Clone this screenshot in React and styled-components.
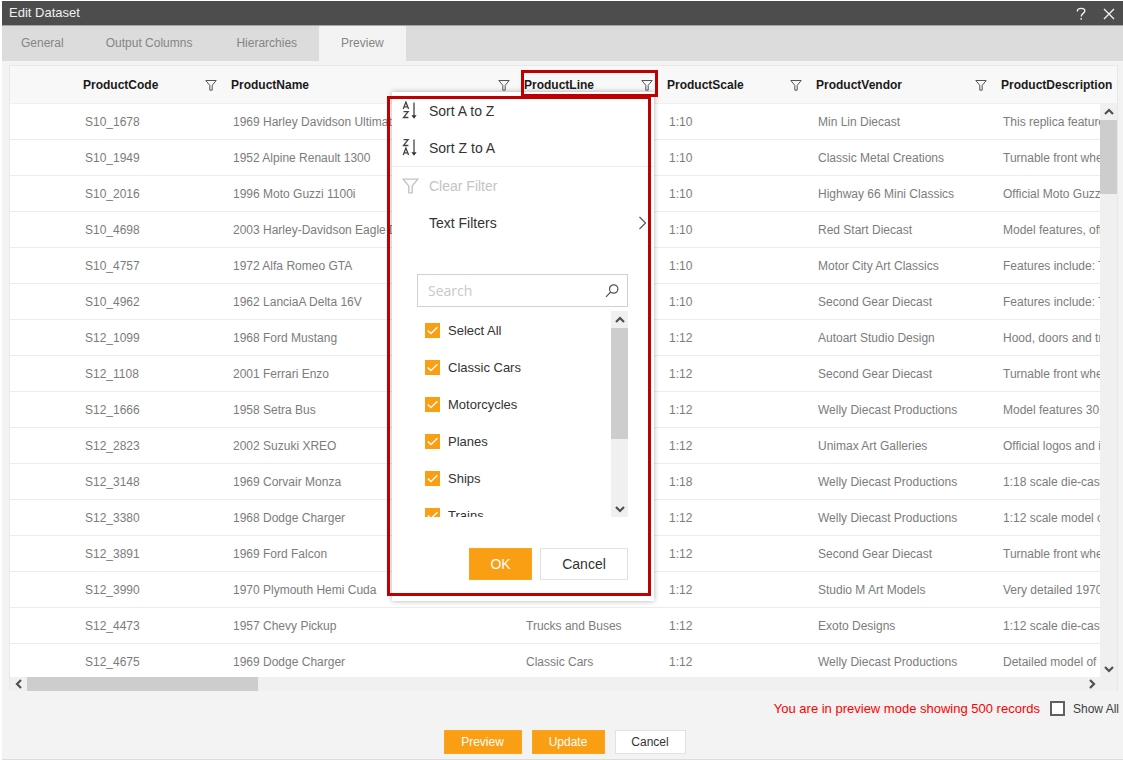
import React from "react";
import styled, { createGlobalStyle, css } from "styled-components";

const GlobalStyle = createGlobalStyle`
  * { box-sizing: border-box; }
  html, body { margin: 0; background: #fff; }
  body, button, input { font-family: "Liberation Sans", Arial, sans-serif; }
  button { margin: 0; padding: 0; cursor: pointer; }
`;

const Dialog = styled.main`
  position: relative;
  display: flex;
  flex-direction: column;
  height: 100vh;
  min-height: 660px;
  padding-bottom: 6px;
  margin-left: 2px;
  border-top: 1px solid #fff;
  box-shadow: inset 0 -1px #dcdcdc;
  background: #f3f3f3;
  overflow: hidden;
`;

const TitleBar = styled.header`
  display: flex;
  align-items: center;
  justify-content: space-between;
  flex: none;
  height: 25px;
  padding: 0 8px 2px 7px;
  background: #4d4d4d;
  border-bottom: 1px solid #a6a6a6;
  color: #f0f0f0;
`;

const Title = styled.h1`
  margin: 0;
  font-size: 13px;
  font-weight: 400;
`;

const TitleActions = styled.div`
  display: flex;
  gap: 16px;
  padding-top: 4px;
`;

const IconButton = styled.button`
  display: flex;
  align-items: center;
  justify-content: center;
  border: 0;
  background: none;
  color: inherit;
`;

const Tabs = styled.nav`
  display: flex;
  flex: none;
  height: 35px;
  background: #dcdcdc;
`;

const Tab = styled.button`
  padding: 0 22px 2px;
  border: 0;
  font-size: 12px;
  color: #858585;
  background: ${(p) => (p.$active ? "#f3f3f3" : "transparent")};
  &:first-child { padding: 0 20px 2px 19px; }
`;

const GridPanel = styled.section`
  display: grid;
  grid-template-rows: minmax(0, 1fr) 14px;
  flex: 1;
  min-height: 0;
  margin: 4px 5px 0 7px;
  border: 1px solid #e8e8e8;
  border-bottom: 0;
`;

const Viewport = styled.div`
  grid-area: 1 / 1;
  min-height: 0;
  overflow: hidden;
  background: #fff;
`;

const Table = styled.table`
  width: 100%;
  table-layout: fixed;
  border-spacing: 0;
  font-size: 12px;
`;

const HeadCell = styled.th`
  height: 38px;
  padding: 1px 4px 0 10px;
  background: #f8f8f8;
  border-bottom: 1px solid #f0f0f0;
  color: #1a1a1a;
  text-align: left;
  white-space: nowrap;
`;

const HeadContent = styled.div`
  display: flex;
  align-items: center;
  justify-content: space-between;
`;

const FilterButton = styled(IconButton)`
  color: #555;
`;

const Cell = styled.td`
  height: 36px;
  padding: 0 0 0 12px;
  border-bottom: 1px solid #ececec;
  color: #7c7c7c;
  white-space: nowrap;
  overflow: hidden;
`;

const ScrollTrack = styled.div`
  display: flex;
  background: #f0f0f0;
  ${(p) =>
    p.$horizontal
      ? css`height: 14px; padding-right: 17px;`
      : css`flex-direction: column; width: 17px;`}
`;

const GridScroll = styled(ScrollTrack)`
  grid-area: 1 / 1;
  justify-self: end;
  margin-top: 37px;
`;

const ScrollThumb = styled.div`
  background: #cdcdcd;
  ${(p) => (p.$horizontal ? `width: ${p.$size}px;` : `height: ${p.$size}px;`)}
`;

const ScrollButton = styled(IconButton)`
  flex: none;
  width: 17px;
  height: ${(p) => (p.$horizontal ? 14 : 17)}px;
  color: #505050;
  ${(p) => p.$end && (p.$horizontal ? "margin-left: auto;" : "margin-top: auto;")}
`;

const StatusRow = styled.div`
  display: flex;
  align-items: center;
  justify-content: flex-end;
  flex: none;
  height: 35px;
  gap: 10px;
  padding-right: 4px;
`;

const Notice = styled.span`
  font-size: 13px;
  color: #f00;
`;

const ShowAll = styled.label`
  display: flex;
  align-items: center;
  gap: 8px;
  font-size: 12px;
  color: #404040;
`;

const PlainCheck = styled.input`
  appearance: none;
  width: 15px;
  height: 15px;
  margin: 0;
  border: 2px solid #606060;
  background: #fff;
`;

const FooterActions = styled.footer`
  display: flex;
  justify-content: center;
  flex: none;
  gap: 10px;
  height: 28px;
  padding: 4px 0 0 4px;
`;

const Button = styled.button`
  width: ${(p) => p.$width}px;
  height: ${(p) => (p.$large ? 32 : 24)}px;
  font-size: ${(p) => (p.$large ? 14 : 12)}px;
  border: 1px solid ${(p) => (p.$primary ? "#fba51f" : "#e2e2e2")};
  background: ${(p) => (p.$primary ? "#fa9e14" : "#fff")};
  color: ${(p) => (p.$primary ? "#fff" : "#333")};
`;

const HeaderHighlight = styled.div`
  position: absolute;
  left: 519px;
  top: 69px;
  width: 137px;
  height: 27px;
  border: 3px solid #c00000;
  pointer-events: none;
`;

const FilterMenu = styled.section`
  position: absolute;
  left: 390px;
  top: 91px;
  width: 262px;
  background: #fff;
  box-shadow: 0 0 5px rgba(0, 0, 0, 0.32);
  padding-bottom: 21px;
`;

const MenuHighlight = styled.div`
  position: absolute;
  inset: 4px 3px 5px -5px;
  border: 3px solid #c00000;
  pointer-events: none;
`;

const MenuItem = styled.button`
  display: grid;
  grid-template-columns: 27px 1fr 9px;
  align-items: center;
  width: 100%;
  height: 37px;
  padding: 0 7px 0 10px;
  border: 0;
  background: none;
  font-size: 14px;
  text-align: left;
  color: ${(p) => (p.disabled ? "#c4c4c4" : "#333")};
`;

const Separator = styled.hr`
  height: 1px;
  margin: 0;
  border: 0;
  background: #ececec;
`;

const MenuBody = styled.div`
  padding: 33px 26px 0 25px;
`;

const SearchBox = styled.label`
  display: flex;
  align-items: center;
  height: 33px;
  padding: 0 8px 0 10px;
  border: 1px solid #cbd1dc;
`;

const SearchInput = styled.input`
  flex: 1;
  min-width: 0;
  padding: 0;
  border: 0;
  outline: 0;
  font-family: "Open Sans", "Noto Sans", sans-serif;
  font-size: 14px;
  &::placeholder { color: #c8c8c8; opacity: 1; }
`;

const ValueArea = styled.div`
  display: flex;
  height: 206px;
  margin-top: 4px;
`;

const ValueList = styled.div`
  flex: 1;
  padding: 1px 0 0 8px;
  overflow: hidden;
`;

const ValueRow = styled.label`
  display: flex;
  align-items: center;
  gap: 8px;
  height: 37px;
  font-size: 13px;
  color: #333;
`;

const CheckWrap = styled.span`
  display: grid;
  width: 15px;
  height: 15px;
  background: #fa9e14;
  & > * { grid-area: 1 / 1; }
`;

const ValueCheck = styled.input`
  appearance: none;
  width: 15px;
  height: 15px;
  margin: 0;
`;

const MenuActions = styled.div`
  display: flex;
  justify-content: flex-end;
  gap: 8px;
  margin-top: 31px;
`;

const Funnel = ({ size = 12 }) => (
  <svg width={size} height={size} viewBox="0 0 12 12" fill="none" stroke="currentColor" strokeWidth="1" aria-hidden="true">
    <path d="M.8 1.5h10.4L7.2 6.3v4.9H4.8V6.3z" />
  </svg>
);

const Chevron = ({ dir }) => {
  const turn = { up: 0, right: 90, down: 180, left: 270 }[dir];
  return (
    <svg width="10" height="10" viewBox="0 0 10 10" fill="none" stroke="currentColor" strokeWidth="2.2" aria-hidden="true">
      <path d="M1 7l4-4 4 4" transform={`rotate(${turn} 5 5)`} />
    </svg>
  );
};

const SortIcon = ({ reverse }) => {
  const a = (y) => <path d={`M1.2 ${y + 7}L3.9 ${y}L6.6 ${y + 7}M2.2 ${y + 4.8}h3.4`} />;
  const z = (y) => <path d={`M1.5 ${y + 0.6}h4.6L1.5 ${y + 6.5}h4.9`} />;
  return (
    <svg width="16" height="19" viewBox="0 0 16 19" fill="none" stroke="#444" strokeWidth="1.3" aria-hidden="true">
      {reverse ? z(1) : a(1)}
      {reverse ? a(10) : z(10)}
      <path d="M12 1.5v14" />
      <path d="M9.4 14.2h5.2l-2.6 3.6z" fill="#333" stroke="none" />
    </svg>
  );
};

const VerticalScroll = ({ as: Track = ScrollTrack, size }) => (
  <Track>
    <ScrollButton type="button" aria-label="Scroll up"><Chevron dir="up" /></ScrollButton>
    <ScrollThumb $size={size} />
    <ScrollButton type="button" aria-label="Scroll down" $end><Chevron dir="down" /></ScrollButton>
  </Track>
);

const columns = [
  { name: "ProductCode", width: 148 },
  { name: "ProductName", width: 293 },
  { name: "ProductLine", width: 143 },
  { name: "ProductScale", width: 149 },
  { name: "ProductVendor", width: 185 },
  { name: "ProductDescription" },
];

const rows = [
  ["S10_1678", "1969 Harley Davidson Ultimate", "", "1:10", "Min Lin Diecast", "This replica features"],
  ["S10_1949", "1952 Alpine Renault 1300", "", "1:10", "Classic Metal Creations", "Turnable front wheels"],
  ["S10_2016", "1996 Moto Guzzi 1100i", "", "1:10", "Highway 66 Mini Classics", "Official Moto Guzzi"],
  ["S10_4698", "2003 Harley-Davidson Eagle D", "", "1:10", "Red Start Diecast", "Model features, offic"],
  ["S10_4757", "1972 Alfa Romeo GTA", "", "1:10", "Motor City Art Classics", "Features include: Tu"],
  ["S10_4962", "1962 LanciaA Delta 16V", "", "1:10", "Second Gear Diecast", "Features include: Tu"],
  ["S12_1099", "1968 Ford Mustang", "", "1:12", "Autoart Studio Design", "Hood, doors and trunk"],
  ["S12_1108", "2001 Ferrari Enzo", "", "1:12", "Second Gear Diecast", "Turnable front wheels"],
  ["S12_1666", "1958 Setra Bus", "", "1:12", "Welly Diecast Productions", "Model features 30"],
  ["S12_2823", "2002 Suzuki XREO", "", "1:12", "Unimax Art Galleries", "Official logos and in"],
  ["S12_3148", "1969 Corvair Monza", "", "1:18", "Welly Diecast Productions", "1:18 scale die-cast"],
  ["S12_3380", "1968 Dodge Charger", "", "1:12", "Welly Diecast Productions", "1:12 scale model of"],
  ["S12_3891", "1969 Ford Falcon", "", "1:12", "Second Gear Diecast", "Turnable front wheels"],
  ["S12_3990", "1970 Plymouth Hemi Cuda", "", "1:12", "Studio M Art Models", "Very detailed 1970"],
  ["S12_4473", "1957 Chevy Pickup", "Trucks and Buses", "1:12", "Exoto Designs", "1:12 scale die-cast"],
  ["S12_4675", "1969 Dodge Charger", "Classic Cars", "1:12", "Welly Diecast Productions", "Detailed model of the"],
];

const lines = ["Select All", "Classic Cars", "Motorcycles", "Planes", "Ships", "Trains"];

export default function App() {
  return (
    <>
      <GlobalStyle />
      <Dialog>
        <TitleBar>
          <Title>Edit Dataset</Title>
          <TitleActions>
            <IconButton type="button" aria-label="Help">
              <svg width="12" height="14" viewBox="0 0 12 14" fill="none" stroke="currentColor" strokeWidth="1.4">
                <path d="M2.4 4.5V3.8C2.4 2.2 4 1.4 6 1.4C8.2 1.4 9.8 2.4 9.8 4C9.8 6.4 6.2 6.3 6.2 9.4M6.2 11v1.7" />
              </svg>
            </IconButton>
            <IconButton type="button" aria-label="Close">
              <svg width="12" height="12" viewBox="0 0 12 12" fill="none" stroke="currentColor" strokeWidth="1.4">
                <path d="M1 1l10 10M11 1L1 11" />
              </svg>
            </IconButton>
          </TitleActions>
        </TitleBar>

        <Tabs>
          <Tab type="button">General</Tab>
          <Tab type="button">Output Columns</Tab>
          <Tab type="button">Hierarchies</Tab>
          <Tab type="button" $active>Preview</Tab>
        </Tabs>

        <GridPanel>
          <Viewport>
            <Table>
              <colgroup>
                <col width="63" />
                {columns.map((c) => <col key={c.name} width={c.width} />)}
              </colgroup>
              <thead>
                <tr>
                  <HeadCell as="td" />
                  {columns.map((c) => (
                    <HeadCell key={c.name} scope="col">
                      <HeadContent>
                        {c.name}
                        {c.width && (
                          <FilterButton type="button" aria-label={`Filter ${c.name}`}>
                            <Funnel />
                          </FilterButton>
                        )}
                      </HeadContent>
                    </HeadCell>
                  ))}
                </tr>
              </thead>
              <tbody>
                {rows.map((r) => (
                  <tr key={r[0]}>
                    <Cell />
                    {r.map((v, i) => <Cell key={i}>{v}</Cell>)}
                  </tr>
                ))}
              </tbody>
            </Table>
          </Viewport>
          <VerticalScroll as={GridScroll} size={74} />
          <ScrollTrack $horizontal>
            <ScrollButton type="button" aria-label="Scroll left" $horizontal><Chevron dir="left" /></ScrollButton>
            <ScrollThumb $horizontal $size={231} />
            <ScrollButton type="button" aria-label="Scroll right" $horizontal $end><Chevron dir="right" /></ScrollButton>
          </ScrollTrack>
        </GridPanel>

        <StatusRow>
          <Notice>You are in preview mode showing 500 records</Notice>
          <ShowAll>
            <PlainCheck type="checkbox" />
            Show All
          </ShowAll>
        </StatusRow>

        <FooterActions>
          <Button type="button" $primary $width={78}>Preview</Button>
          <Button type="button" $primary $width={73}>Update</Button>
          <Button type="button" $width={71}>Cancel</Button>
        </FooterActions>

        <FilterMenu aria-label="ProductLine filter">
          <MenuItem type="button"><SortIcon />Sort A to Z</MenuItem>
          <MenuItem type="button"><SortIcon reverse />Sort Z to A</MenuItem>
          <Separator />
          <MenuItem type="button" disabled><Funnel size={17} />Clear Filter</MenuItem>
          <MenuItem type="button">
            <span />
            Text Filters
            <svg width="9" height="14" viewBox="0 0 9 14" fill="none" stroke="#555" strokeWidth="1.2" aria-hidden="true">
              <path d="M1.5 1l6 6-6 6" />
            </svg>
          </MenuItem>
          <MenuBody>
            <SearchBox>
              <SearchInput type="text" placeholder="Search" aria-label="Search" />
              <svg width="14" height="14" viewBox="0 0 14 14" fill="none" stroke="#555" strokeWidth="1.2" aria-hidden="true">
                <circle cx="8.7" cy="5" r="4.2" />
                <path d="M5.7 8L1 12.8" />
              </svg>
            </SearchBox>
            <ValueArea>
              <ValueList>
                {lines.map((v) => (
                  <ValueRow key={v}>
                    <CheckWrap>
                      <ValueCheck type="checkbox" defaultChecked />
                      <svg width="15" height="15" viewBox="0 0 15 15" fill="none" stroke="#fff" strokeWidth="1.4" aria-hidden="true">
                        <path d="M2.8 7.4l3.2 3.2 6.4-6.4" />
                      </svg>
                    </CheckWrap>
                    {v}
                  </ValueRow>
                ))}
              </ValueList>
              <VerticalScroll size={111} />
            </ValueArea>
            <MenuActions>
              <Button type="button" $large $primary $width={63}>OK</Button>
              <Button type="button" $large $width={88}>Cancel</Button>
            </MenuActions>
          </MenuBody>
          <MenuHighlight />
        </FilterMenu>
        <HeaderHighlight />
      </Dialog>
    </>
  );
}
